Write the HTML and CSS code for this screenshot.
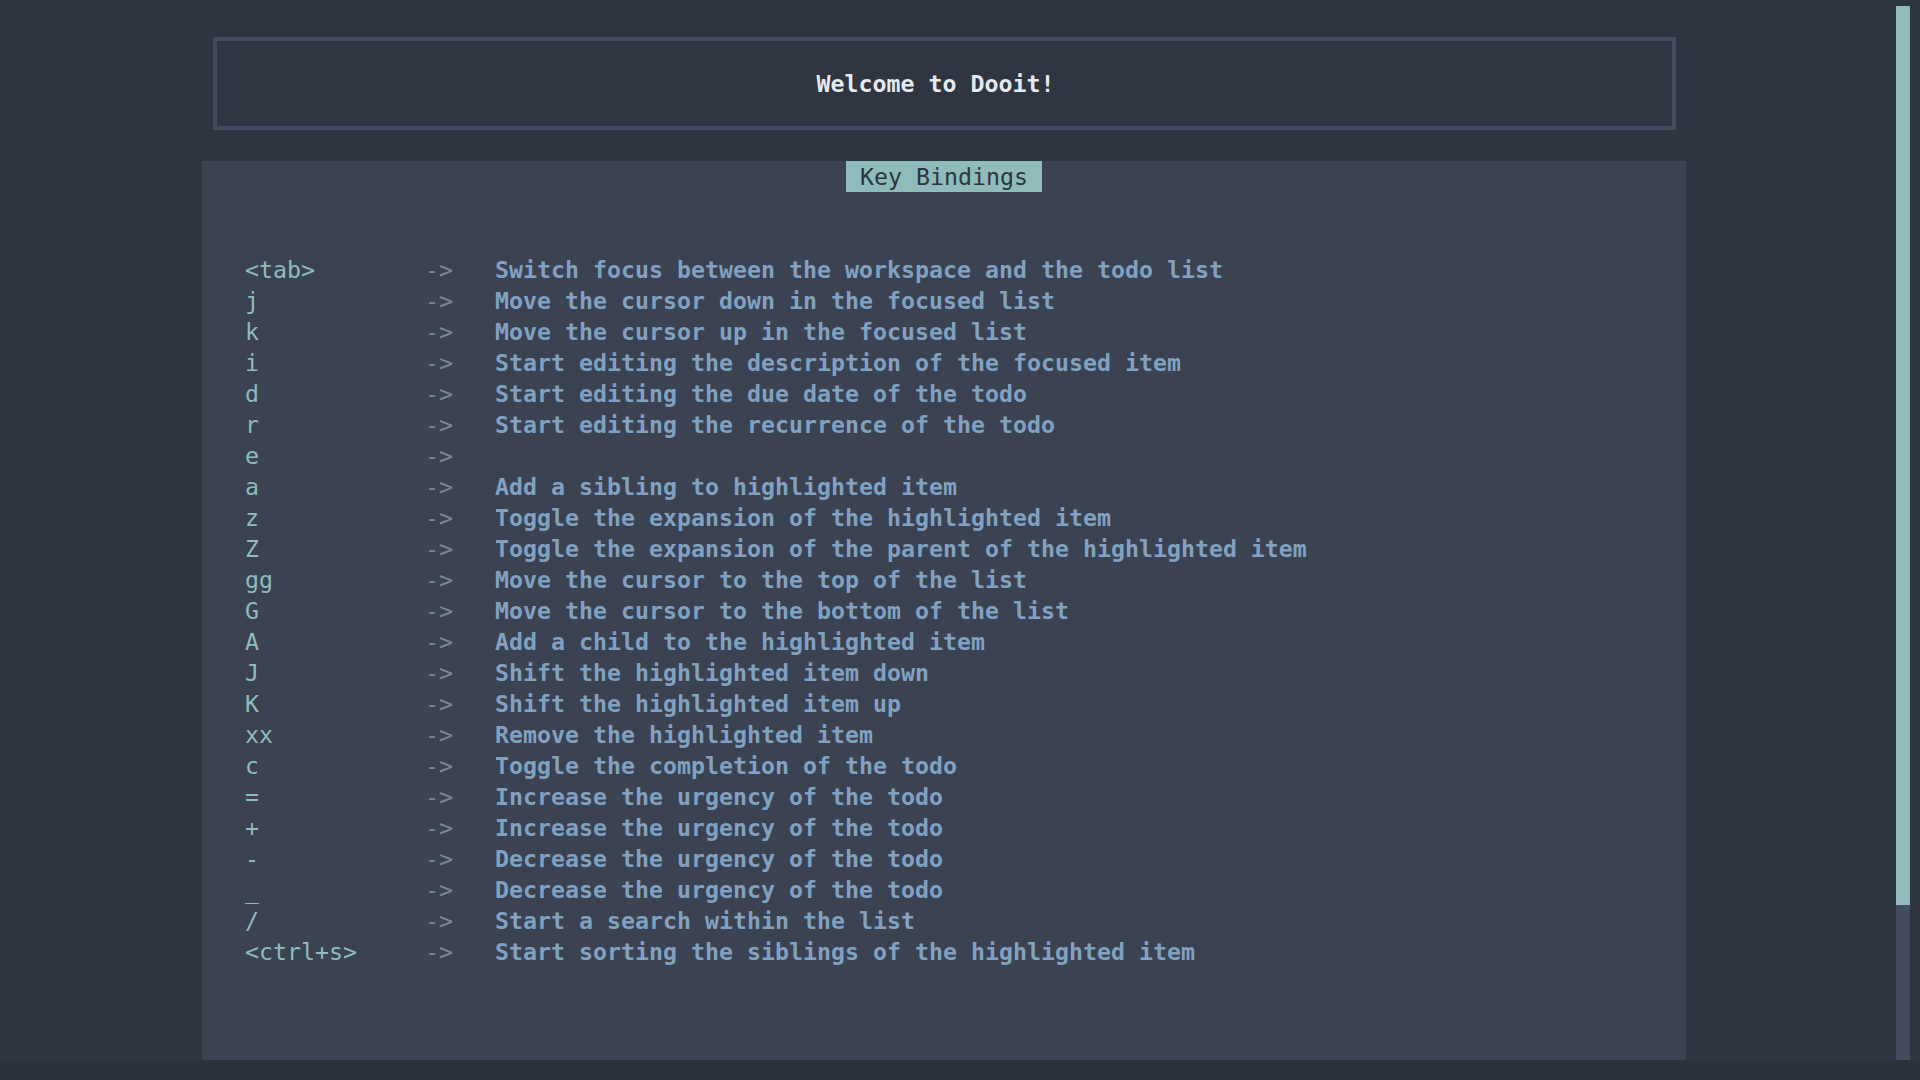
FILE: index.html
```html
<!DOCTYPE html>
<html lang="en">
<head>
<meta charset="utf-8">
<title>Dooit</title>
<link rel="stylesheet" href="styles.css">
</head>
<body>
<div class="app">
  <div class="screen">
    <main class="main">
      <header class="welcome"><span class="welcome-text">Welcome to Dooit!</span></header>
      <section class="panel">
        <div class="panel-title"><span class="label">Key Bindings</span></div>
        <div class="bindings">
          <div class="row"><span class="key">&lt;tab&gt;</span><span class="arrow">-&gt;</span><span class="desc">Switch focus between the workspace and the todo list</span></div>
          <div class="row"><span class="key">j</span><span class="arrow">-&gt;</span><span class="desc">Move the cursor down in the focused list</span></div>
          <div class="row"><span class="key">k</span><span class="arrow">-&gt;</span><span class="desc">Move the cursor up in the focused list</span></div>
          <div class="row"><span class="key">i</span><span class="arrow">-&gt;</span><span class="desc">Start editing the description of the focused item</span></div>
          <div class="row"><span class="key">d</span><span class="arrow">-&gt;</span><span class="desc">Start editing the due date of the todo</span></div>
          <div class="row"><span class="key">r</span><span class="arrow">-&gt;</span><span class="desc">Start editing the recurrence of the todo</span></div>
          <div class="row"><span class="key">e</span><span class="arrow">-&gt;</span><span class="desc"></span></div>
          <div class="row"><span class="key">a</span><span class="arrow">-&gt;</span><span class="desc">Add a sibling to highlighted item</span></div>
          <div class="row"><span class="key">z</span><span class="arrow">-&gt;</span><span class="desc">Toggle the expansion of the highlighted item</span></div>
          <div class="row"><span class="key">Z</span><span class="arrow">-&gt;</span><span class="desc">Toggle the expansion of the parent of the highlighted item</span></div>
          <div class="row"><span class="key">gg</span><span class="arrow">-&gt;</span><span class="desc">Move the cursor to the top of the list</span></div>
          <div class="row"><span class="key">G</span><span class="arrow">-&gt;</span><span class="desc">Move the cursor to the bottom of the list</span></div>
          <div class="row"><span class="key">A</span><span class="arrow">-&gt;</span><span class="desc">Add a child to the highlighted item</span></div>
          <div class="row"><span class="key">J</span><span class="arrow">-&gt;</span><span class="desc">Shift the highlighted item down</span></div>
          <div class="row"><span class="key">K</span><span class="arrow">-&gt;</span><span class="desc">Shift the highlighted item up</span></div>
          <div class="row"><span class="key">xx</span><span class="arrow">-&gt;</span><span class="desc">Remove the highlighted item</span></div>
          <div class="row"><span class="key">c</span><span class="arrow">-&gt;</span><span class="desc">Toggle the completion of the todo</span></div>
          <div class="row"><span class="key">=</span><span class="arrow">-&gt;</span><span class="desc">Increase the urgency of the todo</span></div>
          <div class="row"><span class="key">+</span><span class="arrow">-&gt;</span><span class="desc">Increase the urgency of the todo</span></div>
          <div class="row"><span class="key">-</span><span class="arrow">-&gt;</span><span class="desc">Decrease the urgency of the todo</span></div>
          <div class="row"><span class="key">_</span><span class="arrow">-&gt;</span><span class="desc">Decrease the urgency of the todo</span></div>
          <div class="row"><span class="key">/</span><span class="arrow">-&gt;</span><span class="desc">Start a search within the list</span></div>
          <div class="row"><span class="key">&lt;ctrl+s&gt;</span><span class="arrow">-&gt;</span><span class="desc">Start sorting the siblings of the highlighted item</span></div>
        </div>
      </section>
    </main>
    <div class="scrollbar"><div class="thumb"></div></div>
  </div>
  <div class="footer"></div>
</div>
</body>
</html>
```

FILE: styles.css
```css
html, body {
  margin: 0;
  padding: 0;
}

body {
  background: #2e3440;
  font-family: "DejaVu Sans Mono", "Liberation Mono", monospace;
  font-size: 23.25px;
  line-height: 31px;
  color: #d8dee9;
}

.app {
  width: 1920px;
  height: 1080px;
  display: flex;
  flex-direction: column;
  overflow: hidden;
}

.screen {
  display: flex;
  height: 1060px;
}

.main {
  flex: 1;
  display: flex;
  flex-direction: column;
  padding: 37px 0 0 202px;
}

.welcome {
  margin-left: 11px;
  width: 1463px;
  height: 93px;
  box-sizing: border-box;
  border: 4px solid #434c5e;
  background: #2f3541;
  display: flex;
  align-items: center;
  justify-content: center;
  padding-right: 18px;
}

.welcome-text {
  color: #e5e9f0;
  font-weight: bold;
}

.panel {
  margin-top: 31px;
  width: 1484px;
  height: 899px;
  background: #3b4252;
  display: flex;
  flex-direction: column;
}

.panel-title {
  display: flex;
  justify-content: center;
}

.label {
  background: #8fbcbb;
  color: #2e3440;
  padding: 0 14px;
  height: 31px;
  width: 168px;
  text-align: center;
}

.bindings {
  margin-top: 62px;
  padding-left: 43px;
  display: flex;
  flex-direction: column;
}

.row {
  display: grid;
  grid-template-columns: 180px 70px 1fr;
  height: 31px;
  white-space: pre;
}

.key {
  color: #8fbcbb;
}

.arrow {
  color: #7b8598;
}

.desc {
  color: #81a1c1;
  font-weight: bold;
}

.scrollbar {
  width: 14px;
  margin: 6px 10px 0 0;
  background: #434c5e;
  display: flex;
  flex-direction: column;
}

.thumb {
  height: 899px;
  background: #8fbcbb;
}

.footer {
  height: 20px;
  background: #2c323b;
}
```
